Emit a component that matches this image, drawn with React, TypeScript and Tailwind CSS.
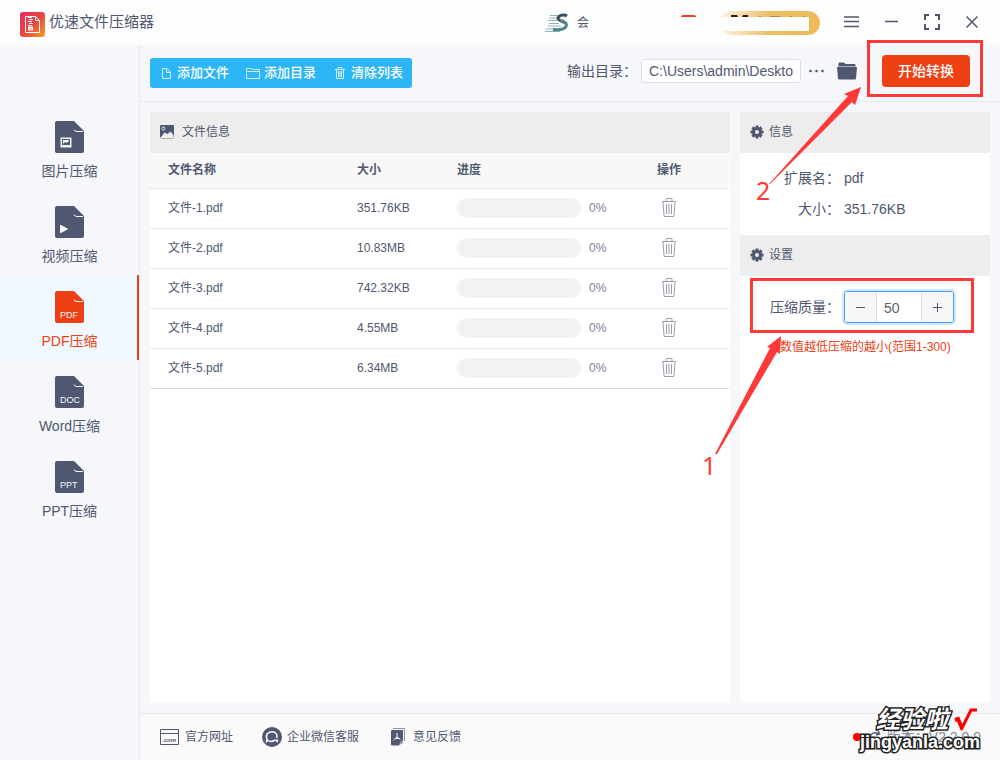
import type { ReactNode } from "react"

const files = [
    { name: "文件-1.pdf", size: "351.76KB" },
    { name: "文件-2.pdf", size: "10.83MB" },
    { name: "文件-3.pdf", size: "742.32KB" },
    { name: "文件-4.pdf", size: "4.55MB" },
    { name: "文件-5.pdf", size: "6.34MB" },
]

function Logo(){
    return <svg width="25" height="25" viewBox="0 0 25 25" fill="none">
        <defs>
            <linearGradient id="logo" x1="0" y1="0" x2="1" y2="1">
                <stop offset="0.1" stopColor="#e62f5c"/>
                <stop offset="0.55" stopColor="#ea4a3c"/>
                <stop offset="1" stopColor="#f5a32f"/>
            </linearGradient>
        </defs>
        <rect width="25" height="25" rx="3" fill="url(#logo)"/>
        <path d="M5.500 4.500H15.500L19.500 8.500V20.500H5.500Z" stroke="#fff"/>
        <path d="M15.500 4.500V8.500H19.500" stroke="#fff"/>
        <path d="M8 5.500H12M9 7.500H13M8 9.500H12M9 11.500H13M8 13.500H12" stroke="#fff"/>
        <path d="M8 14.500H13V18.500H8Z" fill="#fff"/>
        <path d="M9.500 17H11.500" stroke="#ea4a3c"/>
    </svg>
}

function RunnerIcon(){
    return <svg width="24" height="20" viewBox="0 0 24 20" fill="none">
        <path d="M5 2.500H15M4 5H13M3 7.500H12M4 10.500H14M3 13H16M1 16H17M0 18.500H15" stroke="#8fb3ba"/>
        <path d="M22 3C19 1 14 2 13 5C12.500 7.500 19 8.500 20 10" stroke="#3c4f5f" strokeWidth="3"/>
        <path d="M15 7.500C19 8 22.500 10 21 13.500C19.500 16.500 14 17 8 16.500" stroke="#4f868f" strokeWidth="3"/>
    </svg>
}

function DocShape({ children }: { children?: ReactNode }){
    return <svg width="29" height="32" viewBox="0 0 29 32" fill="none">
        <path d="M2 0H19L29 10V30Q29 32 27 32H2Q0 32 0 30V2Q0 0 2 0Z" fill="currentColor"/>
        <path d="M19 8.500Q19.500 10.500 22 10.500H28" stroke="#f5f7fa"/>
        {children}
    </svg>
}

function DocLabel({ text }: { text: string }){
    return <text x="5" y="27" fill="#f5f7fa" fontSize="9" fontFamily="Liberation Sans, sans-serif">{text}</text>
}

function GearIcon(){
    return <svg width="14" height="14" viewBox="0 0 14 14">
        <g fill="currentColor">
            <rect x="5.500" y="0.500" width="3" height="13"/>
            <rect x="5.500" y="0.500" width="3" height="13" transform="rotate(45 7 7)"/>
            <rect x="5.500" y="0.500" width="3" height="13" transform="rotate(90 7 7)"/>
            <rect x="5.500" y="0.500" width="3" height="13" transform="rotate(135 7 7)"/>
            <circle cx="7" cy="7" r="5"/>
        </g>
        <circle cx="7" cy="7" r="2" fill="#ededed"/>
    </svg>
}

function PictureIcon(){
    return <svg width="14" height="14" viewBox="0 0 14 14" fill="none">
        <rect x="0.500" y="0.500" width="13" height="13" rx="1" stroke="#a9aebc"/>
        <path d="M1 0H13Q14 0 14 1V10.500L10.500 6.500L7.500 9L4.500 7.500L1 12H0V1Q0 0 1 0Z" fill="currentColor"/>
        <circle cx="3.500" cy="3.500" r="1.500" stroke="#ededed"/>
    </svg>
}

function TrashIcon(){
    return <svg width="14" height="20" viewBox="0 0 14 20" fill="none" stroke="#9a9fae">
        <path d="M0 3.500H14M4 3.500V1.500Q4 0.500 5 0.500H9Q10 0.500 10 1.500V3.500M1 4L2 17.500Q2 18.500 3 18.500H11Q12 18.500 12 17.500L13 4"/>
        <path d="M4.500 6V16M7 6V16M9.500 6V16"/>
    </svg>
}

function PanelTitle({ icon, children }: { icon: ReactNode, children: ReactNode }){
    return <h2 className="flex h-[41px] shrink-0 items-center bg-[#ededed] px-[10px] pb-[2px] text-xs">
        {icon}
        {children}
    </h2>
}

function NavItem({ label, active, children }: { label: string, active?: boolean, children: ReactNode }){
    return <button className={`flex h-[85px] w-full flex-col items-center gap-2 pt-4 text-sm ${active ? "border-r-2 border-[#ee4015] bg-[#f0f9ff] pl-[2px] text-[#ee4015]" : ""}`}>
        <DocShape>{children}</DocShape>
        <span>{label}</span>
    </button>
}

function Header(){
    return <header className="flex h-[45px] shrink-0 items-center bg-[#fdfdfd]">
        <div className="flex flex-1 items-center gap-1 pl-5">
            <div className="pt-1"><Logo/></div>
            <h1 className="text-[15px]">优速文件压缩器</h1>
        </div>
        <div className="flex items-center">
            <RunnerIcon/>
            <span className="ml-2 text-xs">会</span>
            <span className="relative ml-[92px] h-6 w-[15px]">
                <span className="absolute top-1 h-[2px] w-full rounded-t bg-[#ee4015]"></span>
            </span>
            <button aria-label="会员" className="relative ml-6 h-6 w-[100px] rounded-full bg-linear-to-r from-[#fcf4e6] via-[#edbd62] to-[#edbb5a]">
                <svg width="100" height="24" className="absolute inset-0">
                    <path d="M11 4H17L18 6H11ZM22 6L23 4H28V6Z" fill="#3d1414"/>
                    <path d="M39 5.500H41M50 5.500H60M70 5.500H72M83 5.500H85" stroke="#b08a45"/>
                    <rect x="0" y="6" width="89" height="14" fill="#fdfdfd"/>
                </svg>
            </button>
        </div>
        <div className="mr-[21px] ml-[23px] flex items-center gap-[25px] pb-[2px]">
            <button aria-label="菜单">
                <svg width="17" height="14" viewBox="0 0 17 14" stroke="currentColor" strokeWidth="1.500"><path d="M1 2H16M1 6.500H16M1 11.500H16"/></svg>
            </button>
            <button aria-label="最小化">
                <svg width="14" height="14" viewBox="0 0 14 14" stroke="currentColor" strokeWidth="1.500"><path d="M0 6.500H13"/></svg>
            </button>
            <button aria-label="全屏">
                <svg width="16" height="16" viewBox="0 0 16 16" fill="none" stroke="currentColor" strokeWidth="2"><path d="M1 6V1H5M11 1H15V6M15 10V15H11M5 15H1V10"/></svg>
            </button>
            <button aria-label="关闭">
                <svg width="14" height="14" viewBox="0 0 14 14" stroke="currentColor" strokeWidth="1.500"><path d="M1.500 1.500L12.500 12.500M12.500 1.500L1.500 12.500"/></svg>
            </button>
        </div>
    </header>
}

function Sidebar(){
    return <nav className="w-[140px] shrink-0 border-r border-[#e8eaed] pt-[60px]">
        <NavItem label="图片压缩">
            <rect x="5.500" y="16.500" width="11" height="10" fill="#f5f7fa"/>
            <rect x="7.500" y="18.500" width="7" height="5" stroke="currentColor"/>
            <path d="M8 23L10 21L11.500 22L14 20V23.500H8Z" fill="currentColor"/>
        </NavItem>
        <NavItem label="视频压缩">
            <path d="M5 19.500Q5 18.500 6 19L12.500 22.500Q13.500 23 12.500 23.500L6 27Q5 27.500 5 26.500Z" fill="#f5f7fa"/>
        </NavItem>
        <NavItem label="PDF压缩" active><DocLabel text="PDF"/></NavItem>
        <NavItem label="Word压缩"><DocLabel text="DOC"/></NavItem>
        <NavItem label="PPT压缩"><DocLabel text="PPT"/></NavItem>
    </nav>
}

function ToolButton({ label, children }: { label: string, children: ReactNode }){
    return <button className="flex h-[30px] w-[87px] items-center gap-[3px] pl-2 text-[13px] font-medium whitespace-nowrap">
        <svg width="16" height="16" viewBox="0 0 16 16" fill="none" stroke="#fff" className="shrink-0 opacity-80">{children}</svg>
        {label}
    </button>
}

function Toolbar(){
    return <div className="flex h-[57px] shrink-0 items-center border-b border-[#e8eaed] pr-[30px] pl-[10px]">
        <div className="flex rounded-[3px] bg-[#2cb6f6] pr-px text-white">
            <ToolButton label="添加文件"><path d="M4.500 3.500H9L12.500 7V13.500H4.500ZM8.500 3.500V7.500H12"/></ToolButton>
            <ToolButton label="添加目录"><path d="M1.500 3.500H6.500L7.500 4.500H14.500V13.500H1.500ZM1.500 6.500H14.500"/></ToolButton>
            <ToolButton label="清除列表"><path d="M3 4.500H13M6 4V2.500H10V4M4.500 5V13.500H11.500V5M6.500 6V12M8 6V12M9.500 6V12"/></ToolButton>
        </div>
        <div className="flex flex-1 items-center justify-end pb-1">
            <label htmlFor="output" className="mr-1 text-sm">输出目录：</label>
            <input id="output" defaultValue="C:\Users\admin\Deskto" className="h-6 w-40 rounded-[3px] border border-[#dcdfe6] bg-white px-[7px] text-sm"/>
            <button aria-label="更多" className="ml-2">
                <svg width="15" height="4" viewBox="0 0 15 4" fill="currentColor"><circle cx="1.500" cy="2" r="1.300"/><circle cx="7.500" cy="2" r="1.300"/><circle cx="13.500" cy="2" r="1.300"/></svg>
            </button>
            <button aria-label="打开目录" className="ml-[13px]">
                <svg width="20" height="18" viewBox="0 0 20 18" fill="currentColor">
                    <path d="M1.500 5V1.500Q1.500 0.500 2.500 0.500H7L8.500 2H17.500Q18.500 2 18.500 3V5Z"/>
                    <path d="M1 4.500H19" stroke="#a9aebc"/>
                    <path d="M0.500 5H19.500Q20 5 20 5.500L19 16.500Q19 17.500 18 17.500H2Q1 17.500 1 16.500L0 5.500Q0 5 0.500 5Z"/>
                </svg>
            </button>
            <button className="ml-[25px] h-8 w-[88px] rounded bg-[#ee4015] text-sm font-medium text-white">开始转换</button>
        </div>
    </div>
}

function FileTable(){
    return <section className="flex-1 bg-white">
        <PanelTitle icon={<span className="mr-2"><PictureIcon/></span>}>文件信息</PanelTitle>
        <div className="pr-px">
            <table className="w-full table-fixed text-left text-xs">
                <colgroup>
                    <col/>
                    <col className="w-[100px]"/>
                    <col className="w-[170px]"/>
                    <col className="w-[120px]"/>
                </colgroup>
                <thead className="bg-[#f8f8f8]">
                    <tr className="h-[35px] border-b border-[#e4e5e8]">
                        <th className="pl-[18px]">文件名称</th>
                        <th className="pl-[18px]">大小</th>
                        <th className="pl-[18px]">进度</th>
                        <th className="text-center">操作</th>
                    </tr>
                </thead>
                <tbody>
                    {files.map((file) => (
                        <tr key={file.name} className="h-10 border-b border-[#e8e9ec] last:border-[#d8dade]">
                            <td className="pl-[18px]">{file.name}</td>
                            <td className="pl-[18px]">{file.size}</td>
                            <td className="pl-[18px]">
                                <div className="flex items-center gap-2">
                                    <div className="h-5 w-[124px] rounded-full bg-[#f2f2f2]"></div>
                                    <span className="text-[#7c8398]">0%</span>
                                </div>
                            </td>
                            <td>
                                <button aria-label="删除" className="mx-auto block"><TrashIcon/></button>
                            </td>
                        </tr>
                    ))}
                </tbody>
            </table>
        </div>
    </section>
}

function SettingsPanel(){
    return <aside className="w-[250px] shrink-0 bg-white">
        <PanelTitle icon={<span className="mr-[5px]"><GearIcon/></span>}>信息</PanelTitle>
        <dl className="grid h-[82px] grid-cols-[100px_1fr] content-center items-center gap-x-1 text-sm leading-[31px]">
            <dt className="text-right">扩展名：</dt>
            <dd>pdf</dd>
            <dt className="text-right">大小：</dt>
            <dd>351.76KB</dd>
        </dl>
        <PanelTitle icon={<span className="mr-[5px]"><GearIcon/></span>}>设置</PanelTitle>
        <div className="flex items-center gap-1 pt-[15px] text-sm">
            <label htmlFor="quality" className="w-[100px] text-right">压缩质量：</label>
            <div className="flex h-8 w-[110px] overflow-hidden rounded-[3px] border border-[#409eff] ring-2 ring-[#d3e6fb]">
                <button aria-label="减少" className="flex w-8 items-center justify-center border-r border-[#dcdfe6] bg-[#f7f7f7]">
                    <svg width="9" height="9" viewBox="0 0 9 9" stroke="currentColor"><path d="M0 4.500H9"/></svg>
                </button>
                <input id="quality" defaultValue="50" className="min-w-0 flex-1 pt-[2px] pl-[7px] text-[#606266] outline-none"/>
                <button aria-label="增加" className="flex w-8 items-center justify-center border-l border-[#dcdfe6] bg-[#f7f7f7]">
                    <svg width="9" height="9" viewBox="0 0 9 9" stroke="currentColor"><path d="M0 4.500H9M4.500 0V9"/></svg>
                </button>
            </div>
        </div>
        <p className="mt-4 pl-10 text-xs text-[#ee4015]">数值越低压缩的越小(范围1-300)</p>
    </aside>
}

function Watermark(){
    return <div className="absolute right-4 bottom-1 h-12 w-[124px] font-bold text-white">
        <span className="absolute top-0 left-4 text-2xl leading-6 italic [-webkit-text-stroke:3px_#222] [paint-order:stroke_fill]">经验啦</span>
        <svg width="24" height="24" viewBox="0 0 24 24" fill="none" stroke="#f00" className="absolute top-0 right-[6px]">
            <path d="M1 12L4 11L8 20" strokeWidth="4"/>
            <path d="M7 22L17 2H23" strokeWidth="3"/>
        </svg>
        <span className="absolute top-6 left-0 text-lg leading-5 [-webkit-text-stroke:3px_#222] [paint-order:stroke_fill]">jingyanla.com</span>
    </div>
}

function Footer(){
    return <footer className="relative flex h-[47px] shrink-0 items-center border-t border-[#e8eaed] bg-[#fafafa] pr-[19px] pl-5 text-xs">
        <a href="#" className="flex items-center gap-[6px]">
            <svg width="19" height="16" viewBox="0 0 19 16" fill="none" stroke="currentColor">
                <path d="M0.500 0.500H18.500V15.500H0.500ZM0.500 4.500H18.500"/>
                <text x="2" y="13" fill="currentColor" stroke="none" fontSize="6" fontWeight="bold" fontFamily="Liberation Sans, sans-serif">.com</text>
            </svg>
            官方网址
        </a>
        <a href="#" className="ml-[29px] flex items-center gap-[5px]">
            <svg width="20" height="20" viewBox="0 0 20 20" fill="none" stroke="#fafafa" strokeWidth="1.500">
                <circle cx="10" cy="10" r="10" fill="currentColor" stroke="none"/>
                <path d="M13 13Q9 15.500 6 13.500L4.500 14.500L5 12Q3.500 9 5.500 6.500Q9 3.500 13 5.500Q16 8 14.500 11"/>
                <path d="M13.500 12.500L16 15M16 12.500L14 15" strokeWidth="1.200"/>
            </svg>
            企业微信客服
        </a>
        <a href="#" className="ml-8 flex items-center gap-2">
            <svg width="14" height="18" viewBox="0 0 14 18" fill="none">
                <path d="M2 0.500H13.500V13" stroke="#8c92a3"/>
                <path d="M1 2H12V12.500L8 17.500H1Q0 17.500 0 16.500V3Q0 2 1 2Z" fill="currentColor"/>
                <path d="M6 5V9L2.500 12M6 9L9.500 11.500M4.500 10.500H8" stroke="#fafafa"/>
                <path d="M9 17L9.500 14H13Z" fill="currentColor" stroke="#fafafa" strokeWidth="0.500"/>
            </svg>
            意见反馈
        </a>
        <div className="flex flex-1 items-center justify-end text-sm">
            <span className="mr-2 size-2 rounded-full bg-[#f00]"></span>
            <svg width="14" height="14" viewBox="0 0 14 14" fill="none" stroke="currentColor" strokeWidth="1.500" className="mr-1">
                <path d="M1 7Q3 1 9 3.500M9 0.500L10.500 4L7 5M13 7Q11 13 5 10.500"/>
            </svg>
            <span className="opacity-70">版本：V2.2.0.0</span>
        </div>
        <Watermark/>
    </footer>
}

// red frames and arrows that lead the reader through the two steps
function Guides(){
    return <svg width="320" height="500" viewBox="680 0 320 500" fill="none" className="pointer-events-none absolute top-0 right-0">
        <g stroke="#ff3838" strokeWidth="3">
            <rect x="868.500" y="41.500" width="113" height="54"/>
            <rect x="751.500" y="279.500" width="221" height="52"/>
        </g>
        <g fill="#ff3838">
            <path d="M769 184L848 96L844 94L861 87L855 105L852 102L770 184Z"/>
            <path d="M715 454L770 348L767 347L781 336L780 354L777 352L717 454Z"/>
            <g fontSize="25" fontFamily="Noto Sans, sans-serif">
                <text x="702" y="475">1</text>
                <text x="756" y="200">2</text>
            </g>
        </g>
    </svg>
}

export default function App(){
    return <div className="relative flex h-screen flex-col bg-[#f5f7fa] font-['Liberation_Sans','Noto_Sans_CJK_SC',sans-serif] text-[#4f5870]">
        <Header/>
        <div className="flex min-h-0 flex-1">
            <Sidebar/>
            <div className="flex min-w-0 flex-1 flex-col">
                <Toolbar/>
                <main className="flex min-h-0 flex-1 gap-[10px] px-[10px] pt-[10px] pb-[11px]">
                    <FileTable/>
                    <SettingsPanel/>
                </main>
                <Footer/>
            </div>
        </div>
        <Guides/>
    </div>
}
